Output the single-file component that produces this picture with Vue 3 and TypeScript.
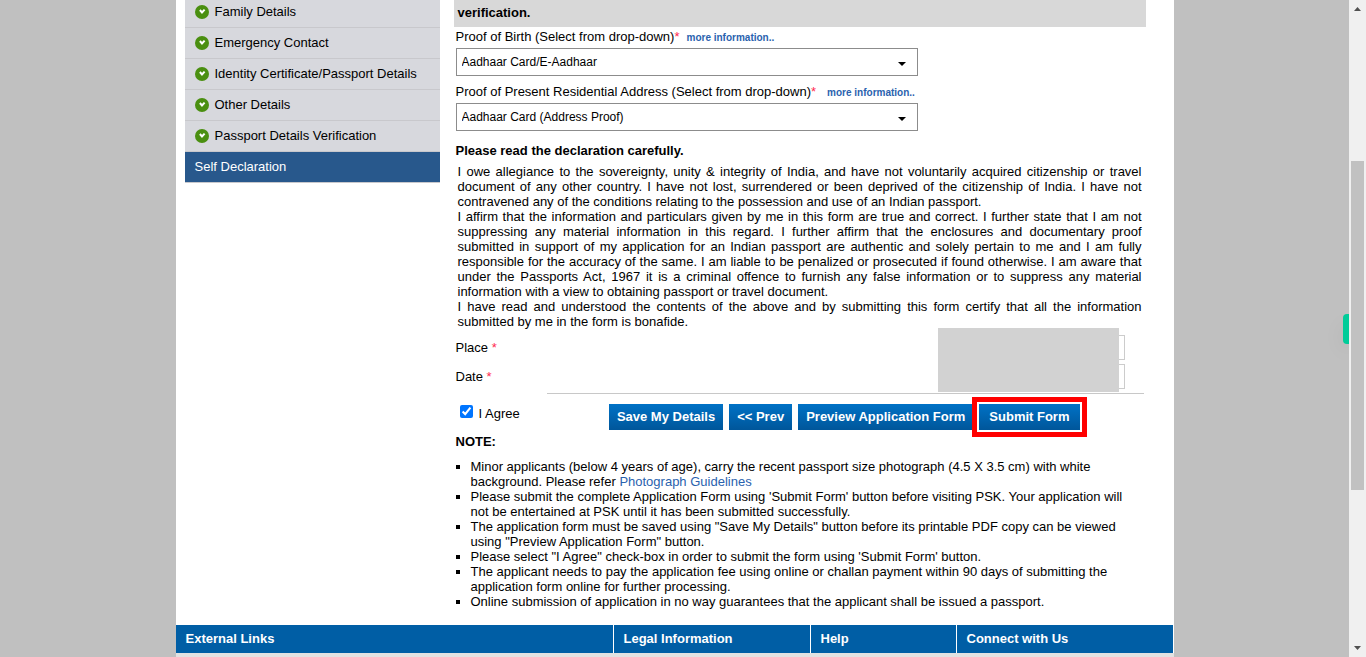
<script setup lang="ts">
import { ref } from 'vue'

interface Proof {
  id: string
  label: string
  value: string
}

const steps: string[] = [
  'Family Details',
  'Emergency Contact',
  'Identity Certificate/Passport Details',
  'Other Details',
  'Passport Details Verification',
]

const proofs: Proof[] = [
  { id: 'birth', label: 'Proof of Birth (Select from drop-down)', value: 'Aadhaar Card/E-Aadhaar' },
  {
    id: 'address',
    label: 'Proof of Present Residential Address (Select from drop-down)',
    value: 'Aadhaar Card (Address Proof)',
  },
]

const declaration: string[] = [
  'I owe allegiance to the sovereignty, unity & integrity of India, and have not voluntarily acquired citizenship or travel document of any other country. I have not lost, surrendered or been deprived of the citizenship of India. I have not contravened any of the conditions relating to the possession and use of an Indian passport.',
  'I affirm that the information and particulars given by me in this form are true and correct. I further state that I am not suppressing any material information in this regard. I further affirm that the enclosures and documentary proof submitted in support of my application for an Indian passport are authentic and solely pertain to me and I am fully responsible for the accuracy of the same. I am liable to be penalized or prosecuted if found otherwise. I am aware that under the Passports Act, 1967 it is a criminal offence to furnish any false information or to suppress any material information with a view to obtaining passport or travel document.',
  'I have read and understood the contents of the above and by submitting this form certify that all the information submitted by me in the form is bonafide.',
]

const notes: string[] = [
  "Please submit the complete Application Form using 'Submit Form' button before visiting PSK. Your application will not be entertained at PSK until it has been submitted successfully.",
  'The application form must be saved using "Save My Details" button before its printable PDF copy can be viewed using "Preview Application Form" button.',
  'Please select "I Agree" check-box in order to submit the form using \'Submit Form\' button.',
  'The applicant needs to pay the application fee using online or challan payment within 90 days of submitting the application form online for further processing.',
  'Online submission of application in no way guarantees that the applicant shall be issued a passport.',
]

const footer: string[] = ['External Links', 'Legal Information', 'Help', 'Connect with Us']

const place = ref('')
const date = ref('')
const agreed = ref(true)
</script>

<template>
  <div class="window">
    <div class="canvas">
      <div class="page">
        <div class="columns">
          <nav class="steps">
            <a v-for="step in steps" :key="step" class="step" href="#">
              <svg class="tick" viewBox="0 0 14 14" aria-hidden="true">
                <circle cx="7" cy="7" r="7" fill="#4a8f10" />
                <path d="M4.9 5 L7 7.4 L9.6 4.6" fill="none" stroke="#fff" stroke-width="2" />
              </svg>
              {{ step }}
            </a>
            <a class="step current" href="#">Self Declaration</a>
          </nav>

          <form class="form" @submit.prevent>
            <h2 class="band">verification.</h2>

            <div v-for="proof in proofs" :key="proof.id" class="proof">
              <div class="proof-head">
                <label :for="proof.id">{{ proof.label }}<span class="star">*</span></label>
                <a class="more" :class="proof.id" href="#">more information..</a>
              </div>
              <div class="picker">
                <select :id="proof.id">
                  <option>{{ proof.value }}</option>
                </select>
                <svg class="arrow" viewBox="0 0 8 4" aria-hidden="true"><path d="M0 0h8l-4 4z" /></svg>
              </div>
            </div>

            <h3 class="heading">Please read the declaration carefully.</h3>
            <div class="declaration">
              <p v-for="text in declaration" :key="text">{{ text }}</p>
            </div>

            <div class="fields">
              <div class="field">
                <label for="place">Place <span class="star">*</span></label>
                <input id="place" v-model="place" type="text" />
              </div>
              <div class="field">
                <label for="date">Date <span class="star">*</span></label>
                <input id="date" v-model="date" type="text" />
              </div>
              <div class="cover"></div>
            </div>

            <hr class="rule" />

            <div class="actions">
              <label class="agree"><input v-model="agreed" type="checkbox" />I Agree</label>
              <div class="buttons">
                <button type="button">Save My Details</button>
                <button type="button">&lt;&lt; Prev</button>
                <button type="button">Preview Application Form</button>
                <span class="ring"><button type="submit">Submit Form</button></span>
              </div>
            </div>

            <h3 class="note-title">NOTE:</h3>
            <ul class="notes">
              <li>
                Minor applicants (below 4 years of age), carry the recent passport size photograph (4.5 X 3.5 cm) with
                white background. Please refer <a href="#">Photograph Guidelines</a>
              </li>
              <li v-for="note in notes" :key="note">{{ note }}</li>
            </ul>
          </form>
        </div>

        <footer class="footer">
          <h4 v-for="title in footer" :key="title">{{ title }}</h4>
        </footer>
        <div class="footer-body"></div>
      </div>
      <div class="side-tab"></div>
    </div>

    <div class="scrollbar" aria-hidden="true">
      <svg class="sb-arrow" viewBox="0 0 7 4"><path d="M0 4h7L3.5 0z" /></svg>
      <div class="track"><div class="thumb"></div></div>
      <svg class="sb-arrow" viewBox="0 0 7 4"><path d="M0 0h7L3.5 4z" /></svg>
    </div>
  </div>
</template>

<style>
body {
  background: #c0c0c0;
  overflow: hidden;
}
</style>

<style scoped>
.window {
  display: flex;
  height: 100vh;
  font: 13px/15px 'Liberation Sans', Arial, sans-serif;
  color: #000;
}
.window * {
  box-sizing: border-box;
}
.canvas {
  position: relative;
  flex: 1;
  min-width: 0;
  overflow: hidden;
  background: #c0c0c0;
}
.page {
  display: flex;
  flex-direction: column;
  max-width: 998px;
  min-height: 100%;
  margin: 0 auto;
  background: #fff;
}
.columns {
  display: flex;
  gap: 14px;
  align-items: flex-start;
  margin-top: -3px;
  padding: 0 28px 16px 9px;
}
.steps {
  flex: 0 0 255px;
}
.step {
  display: flex;
  align-items: center;
  gap: 6px;
  height: 31px;
  padding: 0 0 1px 10px;
  border-bottom: 1px solid #c8c8cc;
  background: #d7d8dd;
  color: #000;
  text-decoration: none;
}
.current {
  background: #28588c;
  color: #fff;
}
.tick {
  width: 14px;
  height: 14px;
}
.form {
  flex: 1;
  min-width: 0;
}
.band {
  margin: 0;
  padding: 8px 4px 7px;
  background: #d8d8d8;
  font-size: 13px;
  line-height: 15px;
}
.proof {
  max-width: 464px;
  padding: 0 0 6px 2px;
}
.proof-head {
  display: flex;
  align-items: center;
  height: 21px;
  padding-bottom: 2px;
}
.star {
  color: #ff2a50;
}
.more {
  margin-left: 7px;
  padding-top: 2px;
  color: #2a62ae;
  font-size: 10px;
  font-weight: bold;
  text-decoration: none;
}
.more.address {
  margin-left: 11px;
}
.picker {
  position: relative;
}
.picker select {
  display: block;
  width: 100%;
  height: 28px;
  padding: 0 20px 0 5px;
  border: 1px solid #8c8c8c;
  border-radius: 0;
  background: #fff;
  color: #000;
  font: 12px/15px 'Liberation Sans', Arial, sans-serif;
  appearance: none;
}
.arrow {
  position: absolute;
  right: 12px;
  top: 14px;
  width: 8px;
  height: 4px;
  pointer-events: none;
}
.heading,
.note-title {
  margin: 0;
  padding-left: 2px;
  font-size: 13px;
  line-height: 15px;
}
.heading {
  padding-top: 6px;
}
.declaration {
  padding: 6px 4px 0;
  text-align: justify;
}
.declaration p {
  margin: 0;
}
.fields {
  position: relative;
  display: grid;
  gap: 4px;
  padding: 6px 21px 4px 2px;
}
.field {
  display: flex;
  align-items: center;
  justify-content: space-between;
}
.field input {
  width: 186px;
  height: 25px;
  border: 1px solid #ccc;
}
.field label {
  padding-bottom: 1px;
}
.cover {
  position: absolute;
  top: -1px;
  right: 27px;
  bottom: 1px;
  width: 181px;
  background: #d2d2d2;
}
.rule {
  height: 1px;
  margin: 0 2px 0 93px;
  border: 0;
  background: #c8c8c8;
}
.actions {
  display: flex;
  justify-content: space-between;
  padding: 10px 66px 4px 6px;
}
.agree {
  display: flex;
  gap: 6px;
  height: 19px;
  align-items: center;
}
.agree input {
  width: 13px;
  height: 13px;
  margin: 0 0 4px;
}
.buttons {
  display: flex;
  gap: 6px;
}
.buttons button {
  height: 26px;
  padding: 0 8px 2px;
  border: 0;
  background: linear-gradient(#0072c6, #00569a);
  color: #fff;
  font: bold 13px/15px 'Liberation Sans', Arial, sans-serif;
}
.ring {
  position: relative;
}
.buttons .ring button {
  padding: 0 10px 2px;
}
.ring::after {
  content: '';
  position: absolute;
  inset: -7px;
  border: 5px solid #f00;
  pointer-events: none;
}
.notes {
  margin: 0;
  padding: 10px 18px 0 17px;
  list-style: square;
}
.notes a {
  color: #2a62ae;
  text-decoration: none;
}
.footer {
  display: grid;
  grid-template-columns: 437fr 196fr 145fr 216fr;
  gap: 1px;
  margin-right: 1px;
}
.footer h4 {
  margin: 0;
  padding: 6px 10px 7px;
  background: #005ea5;
  color: #fff;
  font-size: 13px;
  line-height: 15px;
}
.footer-body {
  flex: 1;
  min-height: 4px;
  background: #e2e2e2;
}
.side-tab {
  position: absolute;
  top: 314px;
  right: 0;
  width: 6px;
  height: 30px;
  border-radius: 4px 0 0 4px;
  background: #00cc99;
  box-shadow: 0 8px 20px rgba(0, 0, 0, 0.08);
}
.scrollbar {
  display: flex;
  flex: 0 0 17px;
  flex-direction: column;
  align-items: center;
  padding: 7px 0;
  background: #f0f0f0;
}
.sb-arrow {
  width: 7px;
  height: 4px;
  fill: #505050;
}
.track {
  flex: 1;
  width: 13px;
  padding-top: 150px;
}
.thumb {
  height: 329px;
  background: #c1c1c1;
}
</style>
